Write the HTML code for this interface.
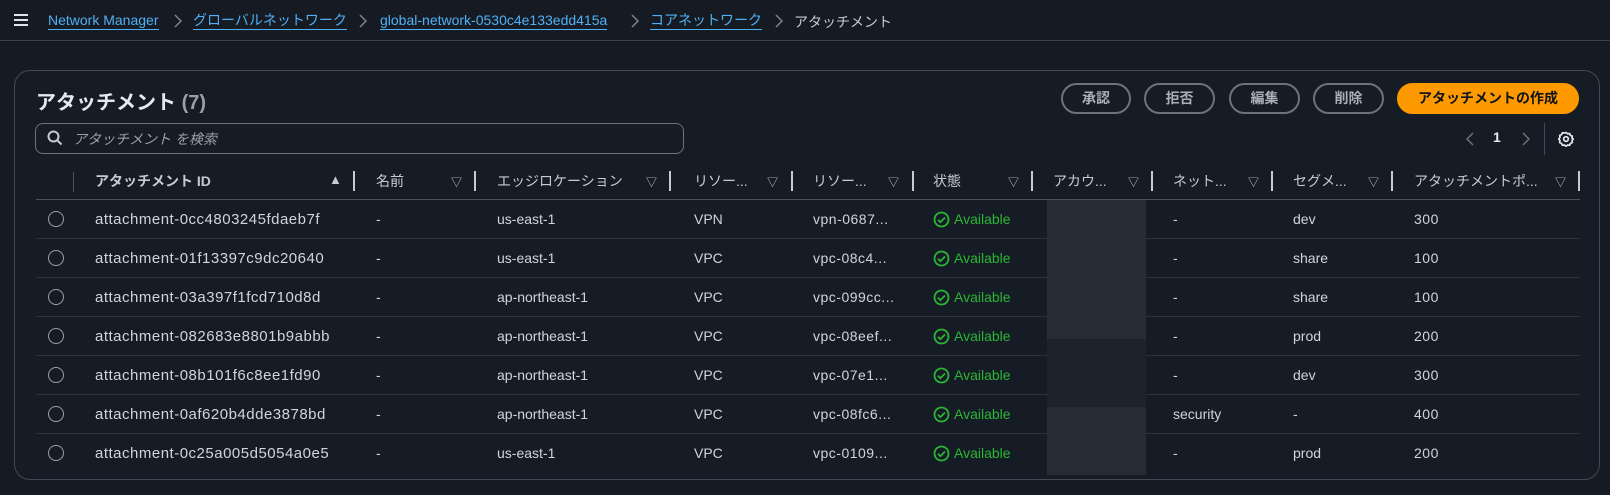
<!DOCTYPE html>
<html><head><meta charset="utf-8"><style>
*{box-sizing:border-box;margin:0;padding:0}
body{width:1610px;height:495px;background:#161b23;font-family:"Liberation Sans","Noto Sans CJK JP",sans-serif;color:#d1d5db;font-size:14px;position:relative;overflow:hidden}
.a{position:absolute;white-space:nowrap}
.hdr{position:absolute;left:0;top:0;width:1610px;height:41px;border-bottom:1px solid #3b424c;background:#161b23}
.bc{position:absolute;top:12px;font-size:14px;color:#4fb0f5;border-bottom:1px solid #4fb0f5;line-height:17px}
.sep{position:absolute;top:14px}
.box{position:absolute;left:14px;top:70px;width:1586px;height:410px;border:1px solid #414a56;border-radius:16px;background:#161c25}
.btn{position:absolute;top:83px;height:31px;border:2px solid #6c737d;border-radius:16px;color:#aab0b8;font-size:14px;font-weight:bold;text-align:center;line-height:27px}
.hd{position:absolute;top:172px;font-size:14px;color:#c6cbd2;font-weight:bold;line-height:18px}
.dv{position:absolute;top:171px;width:2px;height:20px;background:#c6cbd2}
.tri{position:absolute;top:174px;font-size:11px;color:#c6cbd2}
.ln{position:absolute;left:36px;width:1544px;height:1px;background:#2c333d}
.c{position:absolute;font-size:14px;color:#d1d5db;line-height:18px}
.id{font-size:15px;letter-spacing:0.5px;transform:translateY(1px);line-height:20px}
.rs{letter-spacing:0.5px}
.rad{position:absolute;left:48px;width:16px;height:16px;border:1.5px solid #9aa0a8;border-radius:50%}
.av{color:#2bb534}
</style></head><body>
<div class="hdr"></div>
<div class="a" style="left:14px;top:14px;width:14px;height:2px;background:#e0e3e7;box-shadow:0 5px 0 #e0e3e7,0 10px 0 #e0e3e7"></div>
<div class="bc" style="left:48px">Network Manager</div>
<svg class="sep" style="left:174px" width="8" height="14" viewBox="0 0 8 14"><path d="M1 1l6 6-6 6" fill="none" stroke="#7d8590" stroke-width="1.5"/></svg>
<div class="bc" style="left:193px">グローバルネットワーク</div>
<svg class="sep" style="left:359px" width="8" height="14" viewBox="0 0 8 14"><path d="M1 1l6 6-6 6" fill="none" stroke="#7d8590" stroke-width="1.5"/></svg>
<div class="bc" style="left:380px">global-network-0530c4e133edd415a</div>
<svg class="sep" style="left:631px" width="8" height="14" viewBox="0 0 8 14"><path d="M1 1l6 6-6 6" fill="none" stroke="#7d8590" stroke-width="1.5"/></svg>
<div class="bc" style="left:650px">コアネットワーク</div>
<svg class="sep" style="left:775px" width="8" height="14" viewBox="0 0 8 14"><path d="M1 1l6 6-6 6" fill="none" stroke="#7d8590" stroke-width="1.5"/></svg>
<div class="a" style="left:794px;top:12px;color:#c6cbd2">アタッチメント</div>

<div class="box"></div>
<div class="a" style="left:36px;top:86px;font-size:20px;font-weight:bold;color:#e6e9ed">アタッチメント <span style="color:#9aa0a8;font-weight:bold">(7)</span></div>
<div class="a" style="left:35px;top:123px;width:649px;height:31px;border:1px solid #6c737d;border-radius:8px"></div>
<svg class="a" style="left:47px;top:130px" width="16" height="16" viewBox="0 0 16 16"><circle cx="6.5" cy="6.5" r="5" fill="none" stroke="#c6cbd2" stroke-width="2"/><path d="M10 10l4.5 4.5" stroke="#c6cbd2" stroke-width="2"/></svg>
<div class="a" style="left:73px;top:129px;color:#9aa0a8;font-style:italic">アタッチメント を検索</div>

<div class="btn" style="left:1061px;width:70px">承認</div>
<div class="btn" style="left:1144px;width:71px">拒否</div>
<div class="btn" style="left:1229px;width:71px">編集</div>
<div class="btn" style="left:1313px;width:71px">削除</div>
<div class="btn" style="left:1397px;width:182px;background:#ff9900;border-color:#ff9900;color:#0f141a">アタッチメントの作成</div>

<svg class="a" style="left:1466px;top:132px" width="8" height="14" viewBox="0 0 8 14"><path d="M7 1L1 7l6 6" fill="none" stroke="#6c737d" stroke-width="1.5"/></svg>
<div class="a" style="left:1493px;top:129px;color:#e6e9ed;font-weight:bold">1</div>
<svg class="a" style="left:1522px;top:132px" width="8" height="14" viewBox="0 0 8 14"><path d="M1 1l6 6-6 6" fill="none" stroke="#6c737d" stroke-width="1.5"/></svg>
<div class="a" style="left:1544px;top:123px;width:1px;height:32px;background:#414a56"></div>
<svg class="a" style="left:1558px;top:131px" width="16" height="16" viewBox="0 0 16 16"><path d="M8 1.5l1.6 1.3 2-.3.8 1.9 1.9.8-.3 2L15.3 8l-1.3 1.6.3 2-1.9.8-.8 1.9-2-.3L8 15.3l-1.6-1.3-2 .3-.8-1.9-1.9-.8.3-2L.7 8 2 6.4l-.3-2 1.9-.8.8-1.9 2 .3z" fill="none" stroke="#e6e9ed" stroke-width="1.7" stroke-linejoin="round"/><circle cx="8" cy="8" r="2.3" fill="none" stroke="#e6e9ed" stroke-width="1.7"/></svg>

<div class="a" style="left:73px;top:172px;width:1px;height:20px;background:#4a525c"></div>
<div class="hd" style="left:95px">アタッチメント ID</div><div class="tri" style="left:329px;font-size:13px;top:172px">&#9650;</div><div class="dv" style="left:353px"></div>
<div class="hd" style="left:376px;font-weight:normal">名前</div><div class="tri" style="left:451px">&#9661;</div><div class="dv" style="left:474px"></div>
<div class="hd" style="left:497px;font-weight:normal">エッジロケーション</div><div class="tri" style="left:646px">&#9661;</div><div class="dv" style="left:669px"></div>
<div class="hd" style="left:694px;font-weight:normal">リソー...</div><div class="tri" style="left:767px">&#9661;</div><div class="dv" style="left:791px"></div>
<div class="hd" style="left:813px;font-weight:normal">リソー...</div><div class="tri" style="left:888px">&#9661;</div><div class="dv" style="left:912px"></div>
<div class="hd" style="left:933px;font-weight:normal">状態</div><div class="tri" style="left:1008px">&#9661;</div><div class="dv" style="left:1031px"></div>
<div class="hd" style="left:1053px;font-weight:normal">アカウ...</div><div class="tri" style="left:1128px">&#9661;</div><div class="dv" style="left:1151px"></div>
<div class="hd" style="left:1173px;font-weight:normal">ネット...</div><div class="tri" style="left:1248px">&#9661;</div><div class="dv" style="left:1271px"></div>
<div class="hd" style="left:1293px;font-weight:normal">セグメ...</div><div class="tri" style="left:1368px">&#9661;</div><div class="dv" style="left:1391px"></div>
<div class="hd" style="left:1414px;font-weight:normal">アタッチメントポ...</div><div class="tri" style="left:1555px">&#9661;</div><div class="dv" style="left:1578px"></div>
<div class="ln" style="top:199px;background:#4a525c"></div>
<div class="ln" style="top:238px"></div><div class="ln" style="top:277px"></div><div class="ln" style="top:316px"></div><div class="ln" style="top:355px"></div><div class="ln" style="top:394px"></div><div class="ln" style="top:433px"></div>

<div class="a" style="left:1047px;top:200px;width:99px;height:139px;background:#272d35"></div>
<div class="a" style="left:1047px;top:339px;width:99px;height:68px;background:#1d222b"></div>
<div class="a" style="left:1047px;top:407px;width:99px;height:68px;background:#272d35"></div>

<div class="rad" style="top:211px"></div><div class="c id" style="left:95px;top:209px">attachment-0cc4803245fdaeb7f</div><div class="c" style="left:376px;top:210px">-</div><div class="c" style="left:497px;top:210px">us-east-1</div><div class="c" style="left:694px;top:210px">VPN</div><div class="c rs" style="left:813px;top:210px">vpn-0687...</div>
<div class="rad" style="top:250px"></div><div class="c id" style="left:95px;top:248px">attachment-01f13397c9dc20640</div><div class="c" style="left:376px;top:249px">-</div><div class="c" style="left:497px;top:249px">us-east-1</div><div class="c" style="left:694px;top:249px">VPC</div><div class="c rs" style="left:813px;top:249px">vpc-08c4...</div>
<div class="rad" style="top:289px"></div><div class="c id" style="left:95px;top:287px">attachment-03a397f1fcd710d8d</div><div class="c" style="left:376px;top:288px">-</div><div class="c" style="left:497px;top:288px">ap-northeast-1</div><div class="c" style="left:694px;top:288px">VPC</div><div class="c rs" style="left:813px;top:288px">vpc-099cc...</div>
<div class="rad" style="top:328px"></div><div class="c id" style="left:95px;top:326px">attachment-082683e8801b9abbb</div><div class="c" style="left:376px;top:327px">-</div><div class="c" style="left:497px;top:327px">ap-northeast-1</div><div class="c" style="left:694px;top:327px">VPC</div><div class="c rs" style="left:813px;top:327px">vpc-08eef...</div>
<div class="rad" style="top:367px"></div><div class="c id" style="left:95px;top:365px">attachment-08b101f6c8ee1fd90</div><div class="c" style="left:376px;top:366px">-</div><div class="c" style="left:497px;top:366px">ap-northeast-1</div><div class="c" style="left:694px;top:366px">VPC</div><div class="c rs" style="left:813px;top:366px">vpc-07e1...</div>
<div class="rad" style="top:406px"></div><div class="c id" style="left:95px;top:404px">attachment-0af620b4dde3878bd</div><div class="c" style="left:376px;top:405px">-</div><div class="c" style="left:497px;top:405px">ap-northeast-1</div><div class="c" style="left:694px;top:405px">VPC</div><div class="c rs" style="left:813px;top:405px">vpc-08fc6...</div>
<div class="rad" style="top:445px"></div><div class="c id" style="left:95px;top:443px">attachment-0c25a005d5054a0e5</div><div class="c" style="left:376px;top:444px">-</div><div class="c" style="left:497px;top:444px">us-east-1</div><div class="c" style="left:694px;top:444px">VPC</div><div class="c rs" style="left:813px;top:444px">vpc-0109...</div>

<svg class="a" style="left:933px;top:211px" width="17" height="17" viewBox="0 0 17 17"><circle cx="8.5" cy="8.5" r="7" fill="none" stroke="#2bb534" stroke-width="1.8"/><path d="M5 8.7l2.4 2.4 4.6-4.6" fill="none" stroke="#2bb534" stroke-width="1.8"/></svg>
<svg class="a" style="left:933px;top:250px" width="17" height="17" viewBox="0 0 17 17"><circle cx="8.5" cy="8.5" r="7" fill="none" stroke="#2bb534" stroke-width="1.8"/><path d="M5 8.7l2.4 2.4 4.6-4.6" fill="none" stroke="#2bb534" stroke-width="1.8"/></svg>
<svg class="a" style="left:933px;top:289px" width="17" height="17" viewBox="0 0 17 17"><circle cx="8.5" cy="8.5" r="7" fill="none" stroke="#2bb534" stroke-width="1.8"/><path d="M5 8.7l2.4 2.4 4.6-4.6" fill="none" stroke="#2bb534" stroke-width="1.8"/></svg>
<svg class="a" style="left:933px;top:328px" width="17" height="17" viewBox="0 0 17 17"><circle cx="8.5" cy="8.5" r="7" fill="none" stroke="#2bb534" stroke-width="1.8"/><path d="M5 8.7l2.4 2.4 4.6-4.6" fill="none" stroke="#2bb534" stroke-width="1.8"/></svg>
<svg class="a" style="left:933px;top:367px" width="17" height="17" viewBox="0 0 17 17"><circle cx="8.5" cy="8.5" r="7" fill="none" stroke="#2bb534" stroke-width="1.8"/><path d="M5 8.7l2.4 2.4 4.6-4.6" fill="none" stroke="#2bb534" stroke-width="1.8"/></svg>
<svg class="a" style="left:933px;top:406px" width="17" height="17" viewBox="0 0 17 17"><circle cx="8.5" cy="8.5" r="7" fill="none" stroke="#2bb534" stroke-width="1.8"/><path d="M5 8.7l2.4 2.4 4.6-4.6" fill="none" stroke="#2bb534" stroke-width="1.8"/></svg>
<svg class="a" style="left:933px;top:445px" width="17" height="17" viewBox="0 0 17 17"><circle cx="8.5" cy="8.5" r="7" fill="none" stroke="#2bb534" stroke-width="1.8"/><path d="M5 8.7l2.4 2.4 4.6-4.6" fill="none" stroke="#2bb534" stroke-width="1.8"/></svg>
<div class="c av" style="left:954px;top:210px">Available</div>
<div class="c av" style="left:954px;top:249px">Available</div>
<div class="c av" style="left:954px;top:288px">Available</div>
<div class="c av" style="left:954px;top:327px">Available</div>
<div class="c av" style="left:954px;top:366px">Available</div>
<div class="c av" style="left:954px;top:405px">Available</div>
<div class="c av" style="left:954px;top:444px">Available</div>

<div class="c" style="left:1173px;top:210px">-</div><div class="c" style="left:1293px;top:210px">dev</div><div class="c rs" style="left:1414px;top:210px">300</div>
<div class="c" style="left:1173px;top:249px">-</div><div class="c" style="left:1293px;top:249px">share</div><div class="c rs" style="left:1414px;top:249px">100</div>
<div class="c" style="left:1173px;top:288px">-</div><div class="c" style="left:1293px;top:288px">share</div><div class="c rs" style="left:1414px;top:288px">100</div>
<div class="c" style="left:1173px;top:327px">-</div><div class="c" style="left:1293px;top:327px">prod</div><div class="c rs" style="left:1414px;top:327px">200</div>
<div class="c" style="left:1173px;top:366px">-</div><div class="c" style="left:1293px;top:366px">dev</div><div class="c rs" style="left:1414px;top:366px">300</div>
<div class="c" style="left:1173px;top:405px">security</div><div class="c" style="left:1293px;top:405px">-</div><div class="c rs" style="left:1414px;top:405px">400</div>
<div class="c" style="left:1173px;top:444px">-</div><div class="c" style="left:1293px;top:444px">prod</div><div class="c rs" style="left:1414px;top:444px">200</div>
</body></html>
